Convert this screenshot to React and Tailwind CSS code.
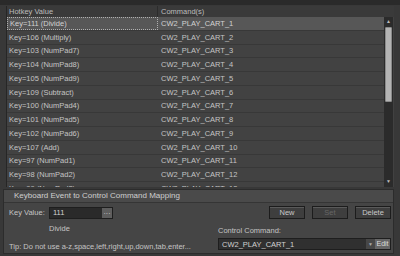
import React from 'react';

const rows = [
  ['Key=111 (Divide)', 'CW2_PLAY_CART_1'],
  ['Key=106 (Multiply)', 'CW2_PLAY_CART_2'],
  ['Key=103 (NumPad7)', 'CW2_PLAY_CART_3'],
  ['Key=104 (NumPad8)', 'CW2_PLAY_CART_4'],
  ['Key=105 (NumPad9)', 'CW2_PLAY_CART_5'],
  ['Key=109 (Subtract)', 'CW2_PLAY_CART_6'],
  ['Key=100 (NumPad4)', 'CW2_PLAY_CART_7'],
  ['Key=101 (NumPad5)', 'CW2_PLAY_CART_8'],
  ['Key=102 (NumPad6)', 'CW2_PLAY_CART_9'],
  ['Key=107 (Add)', 'CW2_PLAY_CART_10'],
  ['Key=97 (NumPad1)', 'CW2_PLAY_CART_11'],
  ['Key=98 (NumPad2)', 'CW2_PLAY_CART_12'],
  ['Key=99 (NumPad3)', 'CW2_PLAY_CART_13'],
];

function Button({ children, disabled }) {
  return (
    <button
      type="button"
      className={
        'h-[13px] w-[36px] border border-[#1c1c1c] bg-[#3e3e3e] shadow-[inset_0_1px_0_#5a5a5a] text-[7.5px] leading-none ' +
        (disabled ? 'text-[#666]' : 'text-[#c8c8c8]')
      }
    >
      {children}
    </button>
  );
}

export default function App() {
  return (
    <div className="flex h-[256px] w-[400px] flex-col overflow-hidden bg-[#383838] font-['Liberation_Sans',Arial,sans-serif] text-[7.5px] text-[#c4c4c4]">
      {/* top strip */}
      <div className="h-[5px] shrink-0 bg-[#2a2a2a]" />

      {/* list */}
      <div className="ml-[6px] mt-[1px] flex h-[181px] w-[388px] shrink-0 flex-col overflow-hidden border-l border-[#262626] bg-[#414141]">
        <div className="flex h-[11px] shrink-0 items-center bg-[#3a3a3a] text-[#bcbcbc]">
          <div className="w-[151px] border-r border-[#2c2c2c] pl-[2px] leading-[11px]">Hotkey Value</div>
          <div className="pl-[3px]">Command(s)</div>
        </div>
        <div className="flex min-h-0 flex-1">
          <div className="min-w-0 flex-1 overflow-hidden">
            {rows.map(([k, c], i) => (
              <div
                key={k}
                className={
                  'flex h-[13.75px] items-center border-b border-[#383838] ' +
                  (i === 0 ? 'bg-[#575757] text-[#d2d2d2]' : 'bg-[#424242]')
                }
              >
                <div
                  className={
                    'flex h-full w-[151px] items-center pl-[2px] ' +
                    (i === 0 ? 'border border-dotted border-[#b0b0b0]' : '')
                  }
                >
                  {k}
                </div>
                <div className="pl-[3px]">{c}</div>
              </div>
            ))}
          </div>
          {/* scrollbar */}
          <div className="mr-[1px] flex w-[9px] shrink-0 flex-col items-center bg-[#2b2b2b]">
            <div className="flex h-[10px] items-center justify-center text-[5px] text-[#bbb]">▲</div>
            <div className="h-[75px] w-[7px] rounded-[1px] border border-[#8a8a8a] bg-[#b4b4b4]" />
            <div className="flex-1" />
            <div className="flex h-[10px] items-center justify-center text-[5px] text-[#bbb]">▼</div>
          </div>
        </div>
      </div>

      {/* mapping panel */}
      <div className="ml-[3px] mt-[2px] flex h-[65px] w-[391px] shrink-0 flex-col border border-[#2c2c2c] bg-[#454545]">
        <div className="flex h-[13px] shrink-0 items-center border-b border-[#353535] bg-[#4a4a4a] pl-[10px] text-[8px] text-[#cfcfcf]">
          Keyboard Event to Control Command Mapping
        </div>
        <div className="flex flex-1">
          <div className="flex w-[214px] flex-col pl-[5px]">
            <div className="mt-[4px] flex items-center">
              <span className="w-[40px]">Key Value:</span>
              <div className="flex h-[12px] w-[64px] items-center border border-[#1e1e1e] bg-[#2a2a2a]">
                <span className="flex-1 pl-[3px] text-[#d4d4d4]">111</span>
                <span className="flex h-full w-[10px] items-center justify-center bg-[#5e5e5e] text-[7px] leading-none text-[#ddd]">···</span>
              </div>
            </div>
            <div className="mt-[4px] pl-[40px]">Divide</div>
            <div className="mt-[7px]">Tip: Do not use a-z,space,left,right,up,down,tab,enter...</div>
          </div>
          <div className="flex flex-1 flex-col pr-[2px]">
            <div className="mt-[3px] flex justify-end gap-[7px]">
              <Button>New</Button>
              <Button disabled>Set</Button>
              <Button>Delete</Button>
            </div>
            <div className="mt-[6px]">Control Command:</div>
            <div className="mt-[2px] flex h-[12px] items-center border border-[#1e1e1e] bg-[#303030]">
              <span className="flex-1 pl-[3px] text-[#d0d0d0]">CW2_PLAY_CART_1</span>
              <span className="flex h-full w-[9px] items-center justify-center bg-[#474747] text-[5px] text-[#aaa]">▼</span>
              <span className="flex h-full w-[15px] items-center justify-center bg-[#666] text-[7px] text-[#ddd]">Edit</span>
            </div>
          </div>
        </div>
      </div>
    </div>
  );
}
